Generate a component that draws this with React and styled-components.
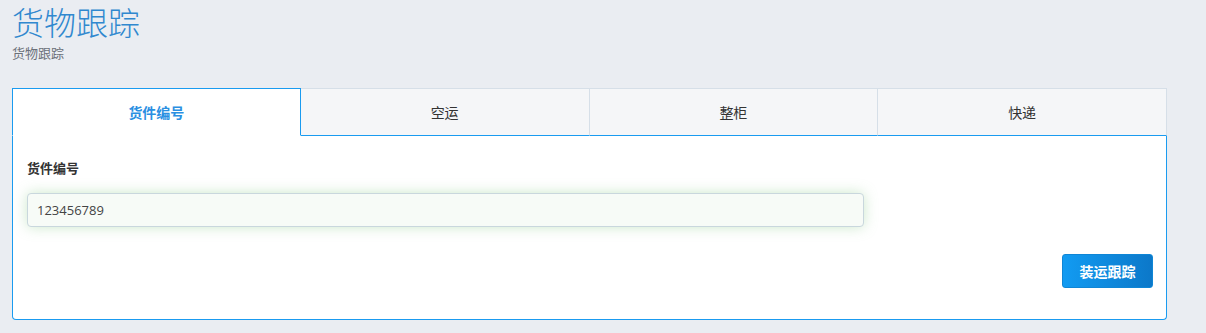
import React, { useState } from "react";
import styled, { createGlobalStyle } from "styled-components";

const Global = createGlobalStyle`
  html, body { margin: 0; padding: 0; background: #eaedf2; }
  body { font-family: "Open Sans", "Noto Sans CJK SC", sans-serif; color: #333; }
  * { box-sizing: border-box; }
`;

const Page = styled.div`
  padding: 0 12px;
  width: 1179px;
`;

const Title = styled.h1`
  margin: 0;
  padding-top: 2px;
  font-family: "Noto Sans CJK SC", sans-serif;
  font-weight: 300;
  font-size: 32px;
  line-height: 38px;
  color: #3088cf;
`;

const Subtitle = styled.div`
  font-family: "Noto Sans CJK SC", sans-serif;
  font-size: 13px;
  line-height: 18px;
  color: #6b7079;
  margin-top: 4px;
`;

const Tabs = styled.div`
  margin-top: 26px;
  width: 1155px;
`;

const TabBar = styled.div`
  display: grid;
  grid-template-columns: repeat(4, 1fr);
  height: 48px;
`;

const Tab = styled.button`
  font-family: "Noto Sans CJK SC", sans-serif;
  font-size: 14px;
  cursor: pointer;
  padding: 0;
  margin: 0;
  border-radius: 0;
  border: 1px solid ${(p) => (p.$active ? "#1a9bf0" : "#d6dfe8")};
  border-bottom: ${(p) => (p.$active ? "1px solid #fff" : "1px solid #1a9bf0")};
  margin-left: ${(p) => (p.$first ? "0" : "-1px")};
  background: ${(p) => (p.$active ? "#fff" : "#f5f6f8")};
  color: ${(p) => (p.$active ? "#2a8fe2" : "#333")};
  font-weight: ${(p) => (p.$active ? 600 : 400)};
  position: relative;
  z-index: ${(p) => (p.$active ? 2 : 1)};
`;

const Panel = styled.div`
  background: #fff;
  border: 1px solid #1a9bf0;
  border-top: none;
  border-radius: 0 0 4px 4px;
  padding: 22px 13px 31px 14px;
  height: 184px;
  display: flex;
  flex-direction: column;
`;

const Label = styled.label`
  font-family: "Noto Sans CJK SC", sans-serif;
  font-size: 13px;
  font-weight: 700;
  color: #333;
  line-height: 20px;
`;

const Input = styled.input`
  margin-top: 15px;
  width: 837px;
  height: 34px;
  padding: 0 9px;
  font-family: "Open Sans", sans-serif;
  font-size: 13px;
  color: #444;
  background: #f7fbf7;
  border: 1px solid #c9d7dd;
  border-radius: 4px;
  outline: none;
  box-shadow: 0 0 14px rgba(110, 190, 110, 0.35);
  caret-color: #222;
`;

const Actions = styled.div`
  margin-top: auto;
  display: flex;
  justify-content: flex-end;
`;

const Button = styled.button`
  width: 91px;
  height: 34px;
  border: 1px solid #0f86d6;
  border-radius: 3px;
  background: linear-gradient(to right, #129bf2, #0c78c9);
  color: #fff;
  font-family: "Noto Sans CJK SC", sans-serif;
  font-weight: 700;
  font-size: 14px;
  cursor: pointer;
`;

const tabs = ["货件编号", "空运", "整柜", "快递"];

export default function App() {
  const [active, setActive] = useState(0);
  return (
    <>
      <Global />
      <Page>
        <Title>货物跟踪</Title>
        <Subtitle>货物跟踪</Subtitle>
        <Tabs>
          <TabBar>
            {tabs.map((t, i) => (
              <Tab key={t} $active={i === active} $first={i === 0} onClick={() => setActive(i)}>
                {t}
              </Tab>
            ))}
          </TabBar>
          <Panel>
            <Label>货件编号</Label>
            <Input defaultValue="123456789" autoFocus />
            <Actions>
              <Button>装运跟踪</Button>
            </Actions>
          </Panel>
        </Tabs>
      </Page>
    </>
  );
}
